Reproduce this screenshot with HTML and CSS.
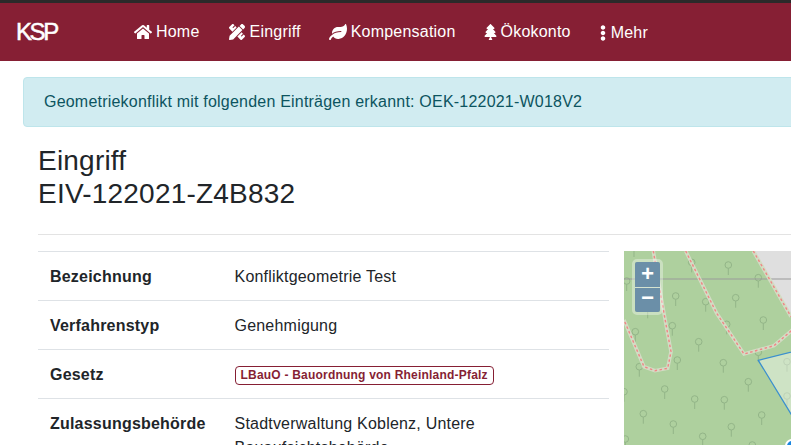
FILE: index.html
```html
<!DOCTYPE html>
<html lang="de">
<head>
<meta charset="utf-8">
<title>KSP</title>
<link rel="stylesheet" href="styles.css">
</head>
<body>
<div class="page">
  <nav class="navbar">
    <a class="brand">KSP</a>
    <ul class="nav">
      <li class="nav-item"><svg class="ico ico-home" viewBox="0 0 576 512"><path d="M280.37 148.26L96 300.11V464a16 16 0 0 0 16 16l112.06-.29a16 16 0 0 0 15.92-16V368a16 16 0 0 1 16-16h64a16 16 0 0 1 16 16v95.64a16 16 0 0 0 16 16.05L464 480a16 16 0 0 0 16-16V300L295.67 148.26a12.19 12.19 0 0 0-15.3 0zM571.6 251.47L488 182.56V44.05a12 12 0 0 0-12-12h-56a12 12 0 0 0-12 12v72.61L318.47 43a48 48 0 0 0-61 0L4.34 251.47a12 12 0 0 0-1.6 16.9l25.5 31A12 12 0 0 0 45.15 301l235.22-193.74a12.19 12.19 0 0 1 15.3 0L530.9 301a12 12 0 0 0 16.9-1.6l25.5-31a12 12 0 0 0-1.7-16.93z"/></svg>Home</li>
      <li class="nav-item"><svg class="ico ico-ruler" viewBox="0 0 512 512"><path d="M109.46 244.04l134.58-134.56-44.12-44.12-61.68 61.68a7.919 7.919 0 0 1-11.21 0l-11.21-11.21c-3.1-3.1-3.1-8.12 0-11.21l61.68-61.68-33.64-33.65C131.47-3.1 111.39-3.1 99 9.29L9.29 99c-12.38 12.39-12.39 32.47 0 44.86l100.17 100.18zm388.47-116.8c18.76-18.76 18.75-49.17 0-67.93l-45.25-45.25c-18.76-18.76-49.18-18.76-67.95 0l-46.02 46.01 113.2 113.2 46.02-46.03zM316.08 82.71l-297 296.96L.32 487.11c-2.53 14.49 10.09 27.11 24.59 24.56l107.45-18.84L429.28 195.9 316.08 82.71zm186.63 285.43l-33.64-33.64-61.68 61.68c-3.1 3.1-8.12 3.1-11.21 0l-11.21-11.21c-3.09-3.1-3.09-8.12 0-11.21l61.68-61.68-44.14-44.14L267.93 402.5l100.21 100.2c12.39 12.39 32.47 12.39 44.86 0l89.71-89.7c12.39-12.39 12.39-32.47 0-44.86z"/></svg>Eingriff</li>
      <li class="nav-item"><svg class="ico ico-leaf" viewBox="0 0 576 512"><path d="M546.2 9.7c-5.6-12.5-21.6-13-28.3-1.2C486.9 62.4 431.4 96 368 96h-80C182 96 96 182 96 288c0 7 .8 13.7 1.5 20.5C161.3 262.8 253.4 224 384 224c8.8 0 16 7.2 16 16s-7.2 16-16 16C132.6 256 26 410.1 2.4 468c-6.6 16.3 1.2 34.9 17.5 41.6 16.4 6.8 35-1.1 41.8-17.3 1.5-3.6 20.9-47.9 71.9-90.6 32.4 43.9 94 85.8 174.9 77.2C465.5 467.5 576 326.7 576 154.3c0-50.2-10.8-102.2-29.8-144.6z"/></svg>Kompensation</li>
      <li class="nav-item"><svg class="ico ico-tree" viewBox="0 0 384 512"><path d="M378.31 378.49L298.42 288h30.63c9.01 0 16.98-5 20.78-13.06 3.8-8.04 2.55-17.26-3.28-24.05L268.42 160h28.89c9.1 0 17.3-5.35 20.86-13.61 3.52-8.13 1.86-17.59-4.24-24.08L203.66 4.83c-6.03-6.45-17.28-6.45-23.32 0L70.06 122.31c-6.1 6.49-7.75 15.95-4.24 24.08C69.38 154.65 77.59 160 86.69 160h28.89l-78.14 90.91c-5.81 6.78-7.06 15.99-3.27 24.04C37.97 283 45.93 288 54.95 288h30.63L5.69 378.49c-6 6.79-7.36 16.09-3.56 24.26C5.92 410.79 14.09 416 23 416h145v24l-31.15 47.22C129.77 498.01 137.37 512 150.23 512h83.54c12.86 0 20.46-13.99 13.38-24.78L216 440v-24h145c8.91 0 17.08-5.21 20.87-13.25 3.8-8.17 2.44-17.47-3.56-24.26z"/></svg>Ökokonto</li>
      <li class="nav-item nav-more"><svg class="ico ico-dots" viewBox="0 0 192 512"><path d="M96 184c39.8 0 72 32.2 72 72s-32.2 72-72 72-72-32.2-72-72 32.2-72 72-72zM24 80c0 39.8 32.2 72 72 72s72-32.2 72-72S135.8 8 96 8 24 40.2 24 80zm0 352c0 39.8 32.2 72 72 72s72-32.2 72-72-32.2-72-72-72-72 32.2-72 72z"/></svg>Mehr</li>
    </ul>
  </nav>

  <div class="alert">Geometriekonflikt mit folgenden Einträgen erkannt: OEK-122021-W018V2</div>

  <main class="content">
    <h1 class="title">Eingriff<br>EIV-122021-Z4B832</h1>
    <hr class="rule">
    <div class="row">
      <div class="details">
        <div class="tr"><div class="th">Bezeichnung</div><div class="td">Konfliktgeometrie Test</div></div>
        <div class="tr"><div class="th">Verfahrenstyp</div><div class="td">Genehmigung</div></div>
        <div class="tr"><div class="th">Gesetz</div><div class="td"><span class="badge">LBauO - Bauordnung von Rheinland-Pfalz</span></div></div>
        <div class="tr"><div class="th">Zulassungsbehörde</div><div class="td">Stadtverwaltung Koblenz, Untere Bauaufsichtsbehörde</div></div>
      </div>
      <div class="map">
        <svg class="map-svg" viewBox="0 0 376 260" width="376" height="260">
          <defs>
            <g id="t" fill="none" stroke="#93b588" stroke-width="1">
              <circle r="3.3"/>
              <path d="M0 3.3V10"/>
            </g>
          </defs>
          <rect width="376" height="260" fill="#aed09e"/>
          <polygon points="129.3,0 167,65.7 200,110 376,110 376,0" fill="#dfdfdf"/>
          <g>
            <use href="#t" x="10" y="-4"/><use href="#t" x="2.7" y="30"/><use href="#t" x="67.7" y="11.3"/><use href="#t" x="104.3" y="14"/><use href="#t" x="134.3" y="26.7"/><use href="#t" x="51.7" y="45"/><use href="#t" x="81.7" y="50.7"/><use href="#t" x="111.7" y="46.7"/><use href="#t" x="139.3" y="69"/><use href="#t" x="102.7" y="73.3"/><use href="#t" x="48.3" y="74.7"/><use href="#t" x="11.3" y="80.7"/><use href="#t" x="74.7" y="90.7"/><use href="#t" x="53.3" y="109"/><use href="#t" x="15.3" y="115.7"/><use href="#t" x="99.3" y="111.7"/><use href="#t" x="134.3" y="101.3"/><use href="#t" x="163" y="110.7"/><use href="#t" x="124.3" y="130.7"/><use href="#t" x="40.7" y="138"/><use href="#t" x="70.7" y="148"/><use href="#t" x="100.3" y="148.7"/><use href="#t" x="163" y="145"/><use href="#t" x="137.7" y="164"/><use href="#t" x="19.3" y="162.7"/><use href="#t" x="49.3" y="173"/><use href="#t" x="107.3" y="175.7"/><use href="#t" x="78.7" y="185.3"/><use href="#t" x="1.3" y="188"/><use href="#t" x="128.3" y="194"/><use href="#t" x="0" y="140.7"/><use href="#t" x="23.7" y="57.3"/>
          </g>
          <path d="M0 28H376" stroke="#999" stroke-width="1.2" fill="none"/>
          <g fill="none" stroke="#d3dcc4" stroke-width="3.6">
            <path d="M29.3 0L36.7 44L42.7 77.3L47 100.7L43.7 117.3L31 119.7L20 115.7L9.3 90.7L0 69"/>
            <path d="M61.7 0L92.7 62.3L120 103L150 94.7L167 80L190 60"/>
            <path d="M129.3 0L167 65.7"/>
          </g>
          <g fill="none" stroke="#f08585" stroke-width="1.4" stroke-dasharray="2.5 2.5">
            <path d="M29.3 0L36.7 44L42.7 77.3L47 100.7L43.7 117.3L31 119.7L20 115.7L9.3 90.7L0 69"/>
            <path d="M61.7 0L92.7 62.3L120 103L150 94.7L167 80L190 60"/>
            <path d="M129.3 0L167 65.7"/>
          </g>
          <polygon points="134.3,109.3 220,88 220,250" fill="#ffffff" fill-opacity="0.4" stroke="#3a8fcf" stroke-width="1.3"/>
          <circle cx="168" cy="195" r="6" fill="#1b87e0" stroke="#fff" stroke-width="2"/>
        </svg>
        <div class="zoom">
          <div class="zoom-btn zoom-in">+</div>
          <div class="zoom-btn">−</div>
        </div>
      </div>
    </div>
  </main>
</div>
</body>
</html>
```
FILE: styles.css
```css
html, body {
  margin: 0;
  padding: 0;
  height: 100%;
  overflow: hidden;
  background: #fff;
}
body {
  font-family: "Liberation Sans", Arial, sans-serif;
  font-size: 16px;
  line-height: 24px;
  letter-spacing: 0.21px;
  color: #212529;
}
.page {
  width: 1100px;
}
.navbar {
  display: flex;
  align-items: center;
  height: 58px;
  border-top: 3px solid #2a2a2a;
  background: #861f34;
  color: #fff;
  padding-left: 16px;
}
.brand {
  width: 118px;
  font-size: 24px;
  letter-spacing: -2.4px;
  font-weight: 400;
  -webkit-text-stroke: 0.5px #fff;
}
.nav {
  display: flex;
  align-items: center;
  gap: 28px;
  margin: 0;
  padding: 0;
  list-style: none;
}
.nav-item {
  display: flex;
  align-items: center;
  gap: 4px;
}
.nav-more {
  position: relative;
  top: 1px;
}
.ico {
  fill: #fff;
  height: 16px;
  display: block;
}
.ico-home { width: 18px; }
.ico-ruler { width: 18px; }
.ico-leaf { width: 18px; }
.ico-tree { width: 13px; }
.ico-dots { width: 8px; }
.alert {
  box-sizing: border-box;
  height: 50px;
  margin: 16px 0 0 23px;
  padding: 12px 20px;
  background: #d1ecf1;
  border: 1px solid #bee5eb;
  border-radius: 4px;
  color: #0c5460;
}
.content {
  padding: 17px 0 0 38px;
}
.title {
  margin: 0;
  font-size: 28px;
  font-weight: 400;
  line-height: 33px;
}
.rule {
  margin: 24px 0 16px;
  border: 0;
  border-top: 1px solid #e3e3e3;
}
.row {
  display: flex;
  gap: 15px;
}
.details {
  flex: 0 0 571px;
}
.tr {
  display: flex;
  border-top: 1px solid #dee2e6;
  padding: 13px 12px 11px;
}
.th {
  flex: 0 0 184.5px;
  font-weight: 700;
}
.td {
  flex: 1;
}
.badge {
  display: inline-block;
  padding: 0 5px;
  border: 1px solid #861f34;
  border-radius: 4px;
  color: #861f34;
  font-size: 12px;
  font-weight: 700;
  line-height: 17px;
  vertical-align: 1px;
}
.map {
  position: relative;
  flex: 1;
  height: 260px;
}
.map-svg {
  display: block;
}
.zoom {
  position: absolute;
  top: 8px;
  left: 8px;
  width: 25px;
  border: 3px solid rgba(255, 255, 255, 0.35);
  border-radius: 5px;
}
.zoom-btn {
  height: 24px;
  background: #6b8fa8;
  color: #fff;
  font-family: "Liberation Mono", monospace;
  font-size: 22px;
  font-weight: 700;
  line-height: 24px;
  letter-spacing: 0;
  text-align: center;
  border-radius: 0 0 2px 2px;
}
.zoom-in {
  height: 25px;
  line-height: 27px;
  border-bottom: 1px solid #d5e3d0;
  border-radius: 2px 2px 0 0;
}
```
